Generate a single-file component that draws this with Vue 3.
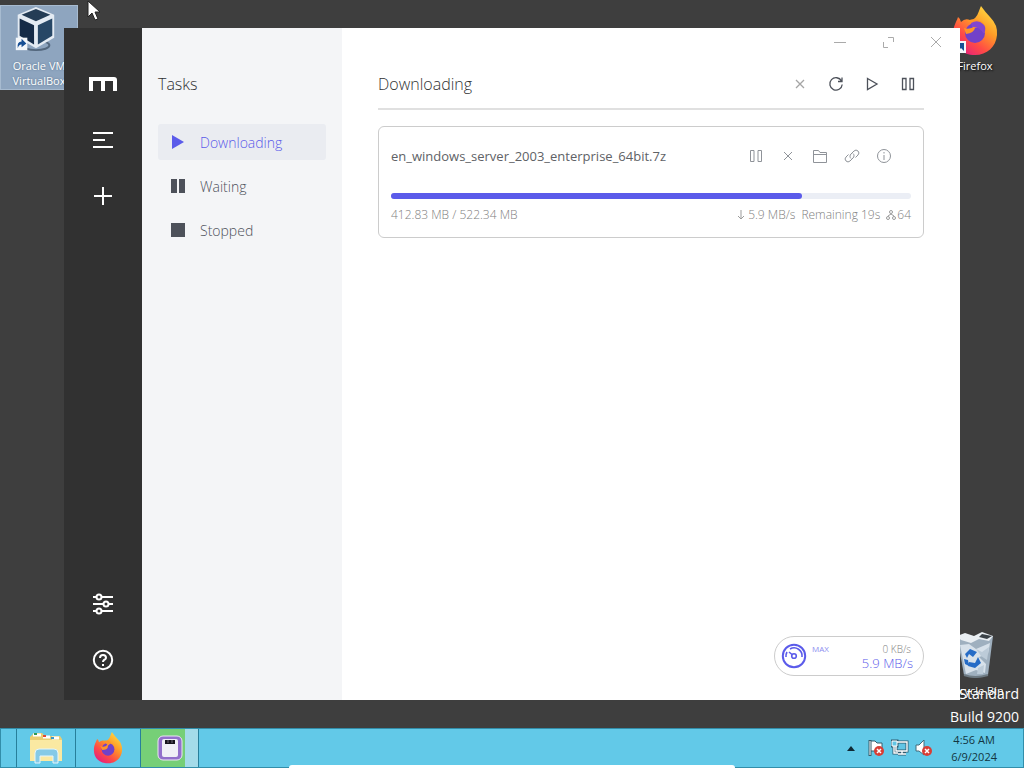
<script setup>
import { computed, ref } from 'vue'

const filters = [
  { id: 'active', label: 'Downloading', icon: 'M2 1L14 8L2 15Z' },
  { id: 'waiting', label: 'Waiting', icon: 'M1 1H7V15H1ZM9 1H15V15H9Z' },
  { id: 'stopped', label: 'Stopped', icon: 'M1 1H15V15H1Z' },
]

const current = ref('active')

const title = computed(() => filters.find((item) => item.id === current.value).label)

const task = {
  name: 'en_windows_server_2003_enterprise_64bit.7z',
  done: 412.83,
  total: 522.34,
  speed: '5.9 MB/s',
  remaining: 'Remaining 19s',
  connections: 64,
}

const percent = computed(() => `${(task.done / task.total) * 100}%`)

const headActions = [
  { label: 'Delete tasks', icon: 'M4 4L12 12M12 4L4 12', muted: true },
  { label: 'Refresh', icon: 'M13.5 5A6.2 6.2 0 1 0 14.2 8.5M14 1.5V5.5H10' },
  { label: 'Resume all', icon: 'M3.5 2.5L13 8L3.5 13.5Z' },
  { label: 'Pause all', icon: 'M2.5 2.5H6V13.5H2.5ZM10 2.5H13.5V13.5H10Z' },
]

const taskActions = [
  { label: 'Pause', icon: 'M2.5 2.5H6V13.5H2.5ZM10 2.5H13.5V13.5H10Z' },
  { label: 'Delete', icon: 'M4 4L12 12M12 4L4 12' },
  { label: 'Open folder', icon: 'M1.5 14.5V2.5H6.5L8 4.5H14.5V14.5ZM1.5 6.5H14.5' },
  {
    label: 'Copy link',
    icon: 'M7 10.5A3 3 0 0 1 7 6L10 3A2.8 2.8 0 0 1 14 7L11.5 9.5M9 5.5A3 3 0 0 1 9 10L6 13A2.8 2.8 0 0 1 2 9L4.5 6.5',
  },
  { label: 'Details', icon: 'M14.5 8A6.5 6.5 0 1 1 1.5 8A6.5 6.5 0 1 1 14.5 8ZM8 7V12M8 4V5.5' },
]
</script>

<template>
  <div class="screen">
    <main class="desktop">
      <a class="shortcut shortcut--selected" href="#">
        <svg width="46" height="48" viewBox="0 0 46 50">
          <ellipse cx="24" cy="41" rx="14" ry="5" fill="none" stroke="#53677d" stroke-width="2" />
          <path d="M24 1L43 9V33L24 44L5 33V9Z" fill="#e4ebf3" />
          <path d="M24 3L39 9L24 16L9 9Z" fill="#243c55" />
          <path d="M7 13L22 20V40L7 31Z" fill="#152b47" />
          <path d="M41 13L26 20V40L41 31Z" fill="#274766" />
          <path d="M3 33H15V46H3Z" fill="#f4f7fa" />
          <path d="M5 44Q4 37 9 37V34L14 39L9 43V40Q6 40 5 44Z" fill="#174f94" />
        </svg>
        <span>Oracle VM VirtualBox</span>
      </a>

      <a class="shortcut shortcut--firefox" href="#">
        <svg width="48" height="50" viewBox="0 0 48 50">
          <defs>
            <linearGradient id="flame" x1="1" y1="0" x2="0.3" y2="1">
              <stop offset="0" stop-color="#fff04a" />
              <stop offset="0.45" stop-color="#ff9a27" />
              <stop offset="0.75" stop-color="#ff4b45" />
              <stop offset="1" stop-color="#e72379" />
            </linearGradient>
          </defs>
          <path
            d="M2 29C2 20 5 17 7 11Q9 12 10 16Q14 12 19 14Q25 14 28 5Q29 2 30 0Q35 7 39 11Q47 19 46 29C45 41 36 49 24 49C11 49 2 41 2 29Z"
            fill="url(#flame)"
          />
          <circle cx="24" cy="27" r="10" fill="#7241c8" />
          <path d="M13 22Q19 24 24 20Q21 16 16 15Q24 11 31 16Q36 20 34 27Q29 20 24 22Q23 27 15 28Z" fill="#ff9428" />
          <path d="M20 17Q27 13 32 18Q36 21 33 28Q28 20 21 21Z" fill="#8246cf" />
          <path d="M0 35H15V47H0Z" fill="#f3f6f9" />
          <path d="M7 37H13V45L10 42L7 45Z" fill="#174f94" />
        </svg>
        <span>Firefox</span>
      </a>

      <a class="shortcut shortcut--bin" href="#">
        <svg width="48" height="48" viewBox="0 0 48 48">
          <path d="M6 4L42 4L37 43Q24 48 13 43Z" fill="#9fb0bf" />
          <path d="M6 4L14 1L23 4L31 0L42 4L38 9L28 7L20 11L10 8Z" fill="#e9eef2" />
          <path d="M31 2L41 4L36 7L28 5Z" fill="#3b4248" />
          <path d="M9 13L18 12L25 17L39 11L37 22L28 25L35 32L34 41L25 38L15 42Z" fill="#d7e1ea" />
          <path d="M25 17L31 20L38 15L36 28L30 24ZM27 36L33 33L32 42L26 42Z" fill="#bccbd8" />
          <path d="M14 22L19 17L26 20L22 25L18 22L16 26ZM27 25L30 31L24 36L17 34L18 30L24 31ZM13 27L17 28L18 34L14 32Z" fill="#266cc6" />
          <path d="M13 43Q24 47 37 43" fill="none" stroke="#6d7a83" stroke-width="2" />
        </svg>
        <span>Recycle Bin</span>
      </a>

      <div class="watermark">
        <span>Standard</span>
        <span>Build 9200</span>
      </div>

      <section class="window">
        <nav class="rail" aria-label="Main">
          <svg class="rail__logo" width="28" height="16" viewBox="0 0 28 16">
            <path d="M2 15V3H25Q26 3 26 4V15M14 3V15" />
          </svg>
          <button type="button" aria-label="Tasks">
            <svg width="24" height="24" viewBox="0 0 24 24">
              <path d="M2 5H22M2 12H14M2 19H22" />
            </svg>
          </button>
          <button type="button" aria-label="New task">
            <svg width="24" height="24" viewBox="0 0 24 24"><path d="M12 3V21M3 12H21" /></svg>
          </button>
          <button type="button" class="rail__bottom" aria-label="Preferences">
            <svg width="24" height="24" viewBox="0 0 24 24">
              <path d="M2 5H5M11 5H22M2 12H12M18 12H22M2 19H5M11 19H22" />
              <circle cx="8" cy="5" r="2.5" />
              <circle cx="15" cy="12" r="2.5" />
              <circle cx="8" cy="19" r="2.5" />
            </svg>
          </button>
          <button type="button" aria-label="Help">
            <svg width="24" height="24" viewBox="0 0 24 24">
              <circle cx="12" cy="12" r="9.2" />
              <path d="M9 10Q9 7 12 7Q15 7 15 10Q15 11 13 12Q12 13 12 14M12 16V18" />
            </svg>
          </button>
        </nav>

        <aside class="sidebar">
          <h2>Tasks</h2>
          <ul>
            <li v-for="item in filters" :key="item.id">
              <button
                type="button"
                :class="{ 'sidebar__item--active': item.id === current }"
                @click="current = item.id"
              >
                <svg width="16" height="16" viewBox="0 0 16 16"><path :d="item.icon" /></svg>
                {{ item.label }}
              </button>
            </li>
          </ul>
        </aside>

        <div class="content">
          <div class="window-controls">
            <button type="button" aria-label="Minimize">
              <svg width="12" height="12" viewBox="0 0 12 12"><path d="M0 6.5H12" /></svg>
            </button>
            <button type="button" aria-label="Maximize">
              <svg width="12" height="12" viewBox="0 0 12 12"><path d="M6 1.5H11.5V6M1.5 6V11.5H6" /></svg>
            </button>
            <button type="button" aria-label="Close">
              <svg width="12" height="12" viewBox="0 0 12 12"><path d="M1 1L11 11M11 1L1 11" /></svg>
            </button>
          </div>

          <header class="content__head">
            <h1>{{ title }}</h1>
            <div class="head-actions">
              <button
                v-for="action in headActions"
                :key="action.label"
                type="button"
                :class="{ 'head-actions__muted': action.muted }"
                :aria-label="action.label"
              >
                <svg width="16" height="16" viewBox="0 0 16 16"><path :d="action.icon" /></svg>
              </button>
            </div>
          </header>

          <article class="task">
            <div class="task__top">
              <h3>{{ task.name }}</h3>
              <div class="task__actions">
                <button
                  v-for="action in taskActions"
                  :key="action.label"
                  type="button"
                  :aria-label="action.label"
                >
                  <svg width="16" height="16" viewBox="0 0 16 16"><path :d="action.icon" /></svg>
                </button>
              </div>
            </div>
            <div class="task__bar">
              <div class="task__progress" :style="{ width: percent }"></div>
            </div>
            <div class="task__info">
              <span>{{ task.done }} MB / {{ task.total }} MB</span>
              <div class="task__stats">
                <span>
                  <svg width="8" height="10" viewBox="0 0 8 10"><path d="M4 0V9M1 6L4 9L7 6" /></svg>
                  {{ task.speed }}
                </span>
                <span>{{ task.remaining }}</span>
                <span class="task__peers">
                  <svg width="10" height="10" viewBox="0 0 10 10">
                    <circle cx="5" cy="2" r="1.5" />
                    <circle cx="2" cy="8" r="1.5" />
                    <circle cx="8" cy="8" r="1.5" />
                    <path d="M5 4L2 6M5 4L8 6" />
                  </svg>
                  {{ task.connections }}
                </span>
              </div>
            </div>
          </article>

          <button type="button" class="speed">
            <svg width="26" height="26" viewBox="0 0 26 26">
              <circle cx="13" cy="13" r="11.2" stroke-width="2" />
              <path d="M5 14A8 8 0 0 1 6 9M9 6A8 8 0 0 1 21 14M8 9L11 11.5" stroke-width="1.6" />
              <circle cx="13" cy="13" r="2.3" stroke-width="1.6" />
            </svg>
            <span class="speed__mode">MAX</span>
            <span class="speed__values">
              <small>0 KB/s</small>
              <strong>5.9 MB/s</strong>
            </span>
          </button>
        </div>
      </section>

      <svg class="cursor" width="14" height="22" viewBox="0 0 14 22">
        <path d="M1 1V17L5 13L8 20L11 19L8 12H13Z" fill="#fff" stroke="#222" />
      </svg>
    </main>

    <footer class="taskbar">
      <div class="taskbar__apps">
        <button type="button" aria-label="File Explorer">
          <svg width="34" height="32" viewBox="0 0 34 32">
            <path d="M2 4L5 1H13L16 4H31L33 7V28H1V5Z" fill="#e9ce74" />
            <path d="M4 3H12M14 5H21M23 6H30" stroke="#fff" stroke-width="3" />
            <path d="M5 2H8" stroke="#2d9955" stroke-width="2" />
            <path d="M14 4H17" stroke="#e14834" stroke-width="2" />
            <path d="M22 6H25" stroke="#3799cc" stroke-width="2" />
            <path d="M1 8H33V29H1Z" fill="#fae9a2" />
            <path d="M6 31V21Q6 17 10 17H25Q29 17 29 21V31H24V24H11V31Z" fill="#85cae7" stroke="#e6f6fb" />
          </svg>
        </button>
        <button type="button" aria-label="Firefox">
          <svg width="32" height="32" viewBox="0 0 48 50">
            <path
              d="M2 29C2 20 5 17 7 11Q9 12 10 16Q14 12 19 14Q25 14 28 5Q29 2 30 0Q35 7 39 11Q47 19 46 29C45 41 36 49 24 49C11 49 2 41 2 29Z"
              fill="url(#flame)"
            />
            <circle cx="24" cy="27" r="10" fill="#7241c8" />
            <path d="M12 22Q19 25 23 20Q20 16 15 14Q24 12 29 17Q22 22 24 23Q23 28 15 28Z" fill="#ff9428" />
          </svg>
        </button>
        <button type="button" class="taskbar__running" aria-label="Motrix">
          <svg width="26" height="26" viewBox="0 0 26 26">
            <rect x="1" y="1" width="24" height="24" rx="5" fill="#9270cb" stroke="#ece4f4" />
            <rect x="5" y="4" width="16" height="18" rx="2" fill="#f0f0f6" />
            <path d="M8 5H18V9H8Z" fill="#17151d" />
            <path d="M11 5V8M15 5V8" stroke="#706b78" />
          </svg>
        </button>
      </div>

      <div class="taskbar__tray">
        <svg width="8" height="5" viewBox="0 0 8 5"><path d="M0 5L4 0L8 5Z" fill="#102a35" /></svg>
        <svg width="18" height="18" viewBox="0 0 18 18">
          <path d="M3 1V17" stroke="#355c6c" stroke-width="3" />
          <path d="M4 2H8L10 4H15V12H4Z" fill="#fff" stroke="#355c6c" />
          <path d="M3 2V16" stroke="#fff" />
          <circle cx="12" cy="12" r="5" fill="#d83e35" />
          <path d="M10 10L14 14M14 10L10 14" stroke="#fff" stroke-width="1.5" />
        </svg>
        <svg width="18" height="18" viewBox="0 0 18 18">
          <path d="M5 3H16V12H5ZM7 15H15M11 12V15M1 2H6V7H1ZM3 7V14H7" fill="#62c5e5" stroke="#315c70" stroke-width="3" />
          <path d="M5 3H16V12H5ZM7 15H15M11 12V15M3 7V14H7" fill="none" stroke="#fff" stroke-width="1.4" />
          <path d="M1 2H6V7H1Z" fill="#62c5e5" stroke="#fff" />
        </svg>
        <svg width="18" height="18" viewBox="0 0 18 18">
          <path d="M1 6H4L9 1V16L4 12H1Z" fill="#fff" stroke="#426b7b" />
          <circle cx="12" cy="12" r="5" fill="#d83e35" />
          <path d="M10 10L14 14M14 10L10 14" stroke="#fff" stroke-width="1.5" />
        </svg>
        <div class="taskbar__clock">
          <span>4:56 AM</span>
          <span>6/9/2024</span>
        </div>
      </div>
      <div class="taskbar__handle"></div>
    </footer>
  </div>
</template>

<style>
body {
  background: #3e3e3e;
}
</style>

<style scoped>
.screen {
  display: flex;
  flex-direction: column;
  min-height: 100vh;
  overflow: hidden;
  font-family: 'Open Sans', 'Noto Sans', sans-serif;
  color: #303133;
  background: #3e3e3e;
}

button {
  padding: 0;
  font: inherit;
  color: inherit;
  background: transparent;
  border: 0;
}

svg {
  flex: none;
  display: block;
}

h1,
h2,
h3,
ul {
  margin: 0;
  padding: 0;
  font-weight: 400;
  list-style: none;
}

.desktop {
  position: relative;
  flex: 1;
  display: flex;
  padding: 28px 64px;
}

.shortcut {
  position: absolute;
  display: flex;
  flex-direction: column;
  align-items: center;
  width: 76px;
  font-size: 11px;
  line-height: 15px;
  color: #fff;
  text-align: center;
  text-decoration: none;
  text-shadow: 1px 1px 2px #000;
}

.shortcut--selected {
  top: 5px;
  left: 0;
  gap: 4px;
  height: 83px;
  background: #8ea5bf;
  border: 1px solid #a7bbd0;
  text-shadow: 0 0 2px #526d89;
}

.shortcut--selected svg {
  margin-right: 8px;
}

.shortcut--firefox {
  top: 6px;
  right: 11px;
  gap: 2px;
}

.shortcut--bin {
  right: 11px;
  bottom: 30px;
  gap: 3px;
}

.watermark {
  position: absolute;
  right: 5px;
  bottom: 0;
  display: flex;
  flex-direction: column;
  align-items: flex-end;
  font-size: 14px;
  line-height: 23px;
  color: #fff;
}

.window {
  position: relative;
  flex: 1;
  display: flex;
  min-width: 0;
  background: #fff;
}

.rail {
  display: flex;
  flex-direction: column;
  align-items: center;
  gap: 32px;
  width: 78px;
  padding: 48px 0 28px;
  box-sizing: border-box;
  background: #313131;
}

.rail svg {
  fill: none;
  stroke: #fff;
  stroke-width: 2;
}

.rail .rail__logo {
  margin-bottom: 4px;
  stroke-width: 4;
}

.rail__bottom {
  margin-top: auto;
}

.sidebar {
  width: 200px;
  padding: 44px 16px;
  box-sizing: border-box;
  background: #f4f5f7;
}

.sidebar h2,
.content h1 {
  font-size: 16px;
  font-weight: 300;
  line-height: 24px;
}

.sidebar ul {
  display: grid;
  gap: 8px;
  margin-top: 28px;
}

.sidebar li button {
  display: flex;
  gap: 14px;
  align-items: center;
  width: 100%;
  height: 36px;
  padding: 0 12px;
  font-size: 14px;
  font-weight: 300;
  color: #4d515a;
  border-radius: 3px;
}

.sidebar li svg {
  fill: currentColor;
}

.sidebar li .sidebar__item--active {
  color: #5b5bea;
  background: #eaecf1;
}

.content {
  flex: 1;
  display: flex;
  flex-direction: column;
  min-width: 0;
  padding: 8px 36px 24px;
}

.window-controls {
  display: flex;
  gap: 36px;
  align-self: flex-end;
  height: 12px;
  margin-right: -18px;
}

.window-controls svg {
  fill: none;
  stroke: #aaa;
}

.content__head {
  display: flex;
  align-items: center;
  justify-content: space-between;
  padding: 24px 0 12px;
  border-bottom: 2px solid #e0e0e0;
}

.head-actions {
  display: flex;
  gap: 20px;
  padding-right: 8px;
}

.head-actions svg {
  fill: none;
  stroke: #4d515a;
  stroke-width: 1.3;
}

.head-actions .head-actions__muted svg {
  stroke: #a5a5a5;
}

.task {
  padding: 16px 12px 14px;
  margin-top: 16px;
  border: 1px solid #ccc;
  border-radius: 6px;
}

.task__top {
  display: flex;
  align-items: center;
  justify-content: space-between;
  height: 26px;
}

.task__top h3 {
  font-size: 13px;
  line-height: 20px;
  color: #606266;
}

.task__actions {
  display: flex;
  gap: 16px;
  padding-right: 19px;
}

.task__actions svg {
  fill: none;
  stroke: #8f9399;
}

.task__bar {
  height: 6px;
  margin-top: 24px;
  background: #ebeef5;
  border-radius: 3px;
}

.task__progress {
  height: 100%;
  background: #5b5bea;
  border-radius: 3px;
}

.task__info {
  display: flex;
  justify-content: space-between;
  margin-top: 8px;
  font-size: 12px;
  font-weight: 300;
  line-height: 16px;
  color: #808080;
}

.task__stats,
.task__stats span {
  display: flex;
  align-items: center;
}

.task__stats {
  gap: 6px;
}

.task__stats span {
  gap: 3px;
}

.task__stats .task__peers {
  gap: 1px;
}

.task__stats svg {
  fill: none;
  stroke: #9b9b9b;
}

.speed {
  display: flex;
  gap: 5px;
  align-self: flex-end;
  width: 150px;
  height: 40px;
  padding: 6px 10px 6px 6px;
  margin-top: auto;
  color: #5b5bea;
  text-align: left;
  border: 1px solid #ccc;
  border-radius: 20px;
}

.speed svg {
  fill: none;
  stroke: currentColor;
}

.speed__mode {
  font-size: 8px;
  line-height: 12px;
  color: #8d8df0;
}

.speed__values {
  display: grid;
  margin-left: auto;
  text-align: right;
}

.speed small {
  padding-right: 2px;
  font-size: 10px;
  font-weight: 300;
  line-height: 12px;
  color: #808080;
}

.speed strong {
  font-size: 13px;
  font-weight: 300;
  line-height: 17px;
}

.cursor {
  position: absolute;
  top: 0;
  left: 87px;
}

.taskbar {
  position: relative;
  display: flex;
  align-items: center;
  justify-content: space-between;
  height: 40px;
  box-sizing: border-box;
  background: #62c9e8;
  border: 1px solid #328eaa;
}

.taskbar__apps {
  display: flex;
  height: 100%;
  margin-left: 15px;
}

.taskbar__apps button {
  display: flex;
  align-items: center;
  justify-content: center;
  width: 59px;
  border-left: 1px solid #277f9b;
}

.taskbar__apps button:nth-child(2) {
  width: 65px;
}

.taskbar__apps .taskbar__running {
  background: linear-gradient(90deg, #76cf77 78%, #a4dbe9 78%);
  border-right: 1px solid #277f9b;
}

.taskbar__tray {
  display: flex;
  gap: 6px;
  align-items: center;
  padding-right: 26px;
}

.taskbar__tray > svg:first-child {
  margin-right: 6px;
}

.taskbar__clock {
  display: grid;
  margin-left: 12px;
  font-size: 11px;
  line-height: 17px;
  color: #123642;
  text-align: center;
}

.taskbar__handle {
  position: absolute;
  right: 288px;
  bottom: -1px;
  left: 288px;
  height: 3px;
  background: #fff;
  border-radius: 3px 3px 0 0;
}
</style>
